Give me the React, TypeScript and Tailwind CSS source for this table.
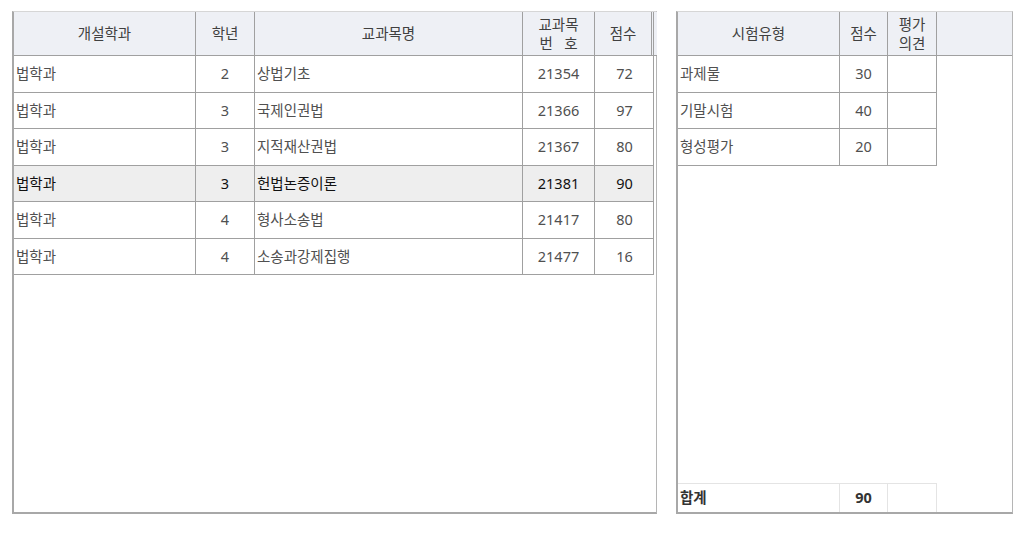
const FONT = "font-['Noto_Sans','Noto_Sans_CJK_KR',sans-serif]";

type Course = { dept: string; year: number; name: string; code: string; score: number; h: string; active?: boolean };

const courses: Course[] = [
  { dept: "법학과", year: 2, name: "상법기초", code: "21354", score: 72, h: "h-[37px]" },
  { dept: "법학과", year: 3, name: "국제인권법", code: "21366", score: 97, h: "h-[36px]" },
  { dept: "법학과", year: 3, name: "지적재산권법", code: "21367", score: 80, h: "h-[37px]" },
  { dept: "법학과", year: 3, name: "헌법논증이론", code: "21381", score: 90, h: "h-[36px]", active: true },
  { dept: "법학과", year: 4, name: "형사소송법", code: "21417", score: 80, h: "h-[37px]" },
  { dept: "법학과", year: 4, name: "소송과강제집행", code: "21477", score: 16, h: "h-[36px]" },
];

const exams = [
  { type: "과제물", score: 30, h: "h-[37px]" },
  { type: "기말시험", score: 40, h: "h-[36px]" },
  { type: "형성평가", score: 20, h: "h-[37px]" },
];

const leftCols = "grid grid-cols-[182px_59px_268px_72px_59px]";
const rightCols = "grid grid-cols-[162px_48px_49px]";

export default function App() {
  return (
    <div className={`${FONT} flex gap-[19px] bg-white pl-[12px] pt-[11px] text-[14.5px] text-[#505050]`}>
      {/* 과목 목록 */}
      <div className="flex h-[503px] w-[645px] flex-col border border-t-[#d6d6d6] border-r-[#b5b5b5] border-b-2 border-l-2 border-b-[#a8a8a8] border-l-[#a8a8a8]">
        <div className={`${leftCols} h-[44px] w-[643px] border-b border-[#a0a0a0] bg-[#eef0f5] text-[#404040]`}>
          <div className="flex items-center justify-center border-r border-[#a0a0a0]">개설학과</div>
          <div className="flex items-center justify-center border-r border-[#a0a0a0]">학년</div>
          <div className="flex items-center justify-center border-r border-[#a0a0a0]">교과목명</div>
          <div className="flex flex-col items-center justify-center border-r border-[#a0a0a0] leading-[19px]">
            <span>교과목</span>
            <span>번&nbsp;&nbsp;&nbsp;호</span>
          </div>
          <div className="flex items-center justify-center border-r-[3px] border-double border-[#a0a0a0]">점수</div>
        </div>
        {courses.map((c) => (
          <div
            key={c.code}
            className={`${leftCols} ${c.h} w-[640px] border-b border-r border-[#a0a0a0] ${c.active ? "bg-[#eeeeee] text-[#111]" : ""}`}
          >
            <div className="flex items-center border-r border-[#a0a0a0] pl-[2px]">{c.dept}</div>
            <div className="flex items-center justify-center border-r border-[#a0a0a0]">{c.year}</div>
            <div className="flex items-center border-r border-[#a0a0a0] pl-[2px]">{c.name}</div>
            <div className="flex items-center justify-center border-r border-[#a0a0a0]">{c.code}</div>
            <div className="flex items-center justify-center">{c.score}</div>
          </div>
        ))}
      </div>

      {/* 시험 유형 */}
      <div className="flex h-[503px] w-[337px] flex-col border border-t-[#d6d6d6] border-r-[#b5b5b5] border-b-2 border-l-2 border-b-[#a8a8a8] border-l-[#a8a8a8]">
        <div className="grid h-[44px] grid-cols-[162px_48px_49px_1fr] border-b border-[#a0a0a0] bg-[#eef0f5] text-[#404040]">
          <div className="flex items-center justify-center border-r border-[#a0a0a0]">시험유형</div>
          <div className="flex items-center justify-center border-r border-[#a0a0a0]">점수</div>
          <div className="flex flex-col items-center justify-center border-r border-[#a0a0a0] leading-[19px]">
            <span>평가</span>
            <span>의견</span>
          </div>
          <div />
        </div>
        {exams.map((e) => (
          <div key={e.type} className={`${rightCols} ${e.h} w-[259px] border-b border-r border-[#a0a0a0]`}>
            <div className="flex items-center border-r border-[#a0a0a0] pl-[2px]">{e.type}</div>
            <div className="flex items-center justify-center border-r border-[#a0a0a0]">{e.score}</div>
            <div />
          </div>
        ))}
        <div className={`${rightCols} mt-auto h-[29px] w-[259px] border-t border-r border-[#e4e4e4] font-bold text-[#333]`}>
          <div className="flex items-center border-r border-[#e4e4e4] pl-[2px]">합계</div>
          <div className="flex items-center justify-center border-r border-[#e4e4e4]">90</div>
          <div />
        </div>
      </div>
    </div>
  );
}
